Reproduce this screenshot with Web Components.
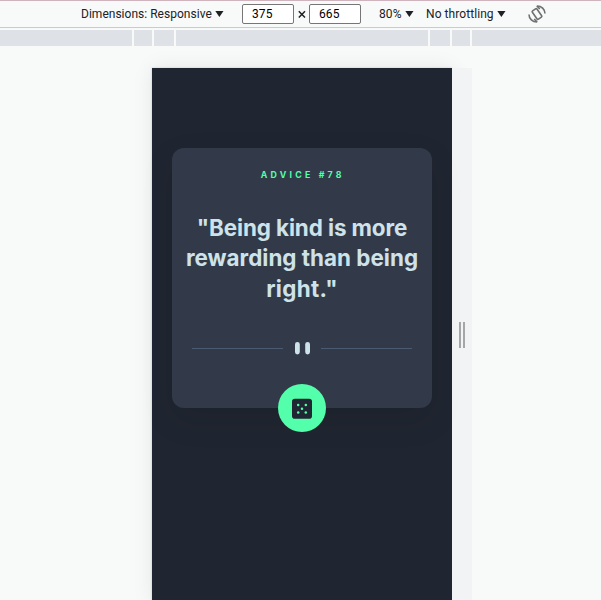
<!DOCTYPE html>
<html lang="en"><head><meta charset="utf-8"><title>Advice generator</title>
<style>html,body{margin:0;height:600px;overflow:hidden;background:#f8faf9}</style></head>
<body><device-preview></device-preview>
<script>
const define=(name,html)=>customElements.define(name,class extends HTMLElement{
  constructor(){super();this.attachShadow({mode:'open'}).innerHTML=html;}
});
define('drop-label',`<style>:host{display:flex;align-items:center;gap:3.5px;white-space:nowrap}svg{display:block}</style><span><slot></slot></span><svg width="9" height="6" viewBox="0 0 9 6"><path d="M.3 0h8.2L4.4 6z" fill="#202124"/></svg>`);
define('size-field',`<style>:host{display:flex;align-items:center;box-sizing:border-box;width:52px;height:20px;border:1px solid #767676;border-radius:2px;background:#fff;padding-left:9px;letter-spacing:.1px;color:#000}</style><slot></slot>`);
define('device-toolbar',`<style>
:host{display:flex;align-items:center;box-sizing:border-box;height:28px;border-top:1px solid #cfb4be;border-bottom:1px solid #c9cccd;background:#f8faf9;padding-left:81px;font:12px/16px Roboto,sans-serif;color:#202124}
.a{width:161px;letter-spacing:.02px}.x{width:15px;display:flex;justify-content:center}.z{margin-left:18px;width:47px;letter-spacing:.1px}.t{width:102px;letter-spacing:.07px}svg{display:block}
</style><drop-label class="a">Dimensions: Responsive</drop-label><size-field>375</size-field><span class="x"><svg width="8" height="8" viewBox="0 0 8 8"><path d="M.8 1.3l6.2 6.2M7 1.3L.8 7.5" stroke="#202124" stroke-width="1.5"/></svg></span><size-field>665</size-field><drop-label class="z">80%</drop-label><drop-label class="t">No throttling</drop-label>
<svg width="18" height="18" viewBox="0 0 18 18" fill="none" stroke="#6e7071" stroke-width="1.6"><rect x="6.2" y="3.9" width="5.6" height="10.2" rx="1" transform="rotate(-35 9 9)"/><path d="M8.8 1C13.5.8 17 4.4 17 8.6M9.2 17C4.5 17.2 1 13.6 1 9.4M8.8 1l3 3M9.2 17l-3-3"/></svg>`);
define('media-ruler',`<style>:host{display:grid;grid-template-columns:132px 18px 20px 252px 20px 18px 129px;gap:2px;height:16px;margin-top:2px}i{background:#dee1e6}</style><i></i><i></i><i></i><i></i><i></i><i></i><i></i>`);
define('resize-handle',`<style>:host{display:flex;align-items:center;justify-content:center;gap:2px;width:20px;height:534px;background:#f1f3f4}i{width:2px;height:26px;background:#a5a6a8}</style><i></i><i></i>`);
define('quote-divider',`<style>:host{display:flex;align-items:center;width:220px;height:13px;justify-content:space-between}i{width:91px;height:1px;background:#4a5a70}svg{display:block}</style><i></i><svg width="16" height="13" viewBox="0 0 16 13" fill="#cee3e9"><rect x="1" y="0" width="4.8" height="12.4" rx="2.4"/><rect x="11.2" y="0" width="4.8" height="12.4" rx="2.4"/></svg><i></i>`);
define('dice-button',`<style>:host{display:flex;align-items:center;justify-content:center;width:48px;height:48px;border-radius:50%;background:#53ffaa}svg{display:block}</style><svg width="20" height="21" viewBox="0 -.5 20 21"><rect y=".2" width="20" height="20" rx="2.8" fill="#202733"/><g fill="#53ffaa"><circle cx="6.2" cy="6.5" r="1.25"/><circle cx="13.8" cy="6.5" r="1.25"/><circle cx="10" cy="10.3" r="1.25"/><circle cx="6.2" cy="14.1" r="1.25"/><circle cx="13.8" cy="14.1" r="1.25"/></g></svg>`);
define('advice-card',`<style>
:host{display:flex;position:relative;flex-direction:column;align-items:center;box-sizing:border-box;width:260px;height:260px;border-radius:12px;background:#323a49;box-shadow:0 12px 32px rgba(0,0,0,.1);padding-top:20px;font-family:Inter,sans-serif;font-weight:700}
.n{font-size:8.8px;line-height:14px;letter-spacing:3.2px;margin-right:-1.5px;color:#53ffaa}
.q{margin-top:31px;font-size:22.4px;line-height:30.4px;color:#cee3e9;text-align:center;white-space:nowrap;display:flex;flex-direction:column;align-items:center}
.l1{letter-spacing:-.1px}.l2{letter-spacing:.02px}.l3{letter-spacing:.35px}
quote-divider{margin-top:38px}
dice-button{position:absolute;left:105.6px;bottom:-24px}
</style><div class="n"><slot name="number"></slot></div><div class="q"><span class="l1">"Being kind is more</span><span class="l2">rewarding than being</span><span class="l3">right."</span></div><quote-divider></quote-divider><dice-button></dice-button>`);
define('phone-screen',`<style>:host{display:flex;justify-content:center;box-sizing:border-box;width:300px;height:534px;padding-top:80px;background:#202631;box-shadow:0 0 20px rgba(0,0,0,.08),0 0 2px rgba(0,0,0,.18)}</style><slot></slot>`);
define('device-preview',`<style>:host{display:block;height:600px;overflow:hidden}.stage{display:flex;margin:22px 0 0 152px}</style><device-toolbar></device-toolbar><media-ruler></media-ruler><div class="stage"><phone-screen><advice-card><span slot="number">ADVICE #78</span></advice-card></phone-screen><resize-handle></resize-handle></div>`);
</script></body></html>
